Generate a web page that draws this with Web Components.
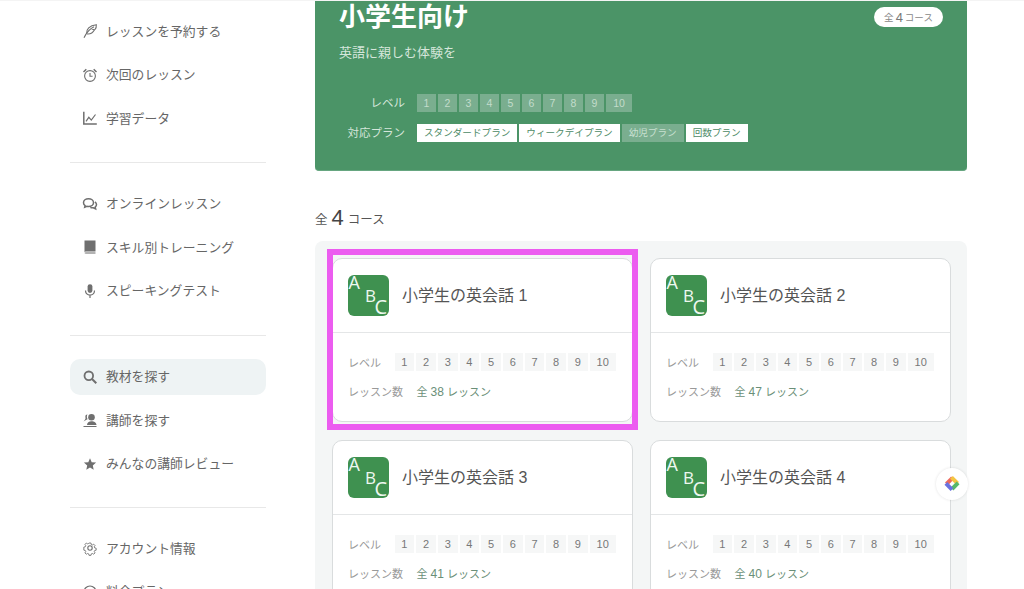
<!DOCTYPE html>
<html lang="ja">
<head>
<meta charset="utf-8">
<title>教材を探す</title>
<style>
  html, body { margin: 0; height: 589px; overflow: hidden; background: #fff; }
  body { font-family: "Liberation Sans", "Noto Sans CJK JP", sans-serif; color: #666; }
</style>
</head>
<body>
<app-shell>
  <side-nav slot="side">
    <nav-group>
      <nav-item icon="feather">レッスンを予約する</nav-item>
      <nav-item icon="clock">次回のレッスン</nav-item>
      <nav-item icon="chart">学習データ</nav-item>
    </nav-group>
    <nav-group>
      <nav-item icon="chat">オンラインレッスン</nav-item>
      <nav-item icon="book">スキル別トレーニング</nav-item>
      <nav-item icon="mic">スピーキングテスト</nav-item>
    </nav-group>
    <nav-group>
      <nav-item icon="search" active>教材を探す</nav-item>
      <nav-item icon="user">講師を探す</nav-item>
      <nav-item icon="star">みんなの講師レビュー</nav-item>
    </nav-group>
    <nav-group last>
      <nav-item icon="gear">アカウント情報</nav-item>
      <nav-item icon="plan">料金プラン</nav-item>
    </nav-group>
  </side-nav>
  <hero-banner heading="小学生向け" desc="英語に親しむ体験を" count="4"></hero-banner>
  <course-count count="4"></course-count>
  <course-panel>
    <course-card name="小学生の英会話 1" lessons="38" highlight></course-card>
    <course-card name="小学生の英会話 2" lessons="47"></course-card>
    <course-card name="小学生の英会話 3" lessons="41"></course-card>
    <course-card name="小学生の英会話 4" lessons="40"></course-card>
  </course-panel>
</app-shell>
<float-button></float-button>

<script>
const ICONS = {
  feather: '<path d="M2 14.800C4.500 9.500 7.500 6 12 3.800"/><path d="M4.600 10.800C4 6.500 7.500 2.300 14.300 1.700c.2 2-.3 3.500-1.200 4.600l-2 .2 1.300.6c-1.500 2.800-4.200 4.200-7.300 3.900"/>',
  clock: '<circle cx="8" cy="9" r="5.400"/><path d="M8 5.900v3.300h2.600"/><path d="M1.500 5 4.300 2.300M14.500 5 11.700 2.300" stroke-width="1.500"/>',
  chart: '<path d="M1.800 1.800V14h13" stroke-width="1.500"/><path d="M4 11.300 6.800 7.300l2.500 2.800L13.500 4.500" stroke-width="1.200"/>',
  chat: '<path d="M6.500 2.800c-2.800 0-5 1.700-5 3.900 0 1.200.6 2.200 1.600 2.900l-.4 1.700 2.200-1c.5.100 1 .2 1.600.2 2.800 0 5-1.700 5-3.800s-2.200-3.900-5-3.900z" stroke-width="1.500"/><path d="M12.900 5.800c1 .6 1.600 1.600 1.600 2.700 0 1-.5 1.900-1.300 2.500l.4 1.800-2.300-1.100c-1.100.2-2.200 0-3-.4" stroke-width="1.500"/>',
  book: '<path fill="#6f6f6f" stroke="none" d="M2.500 1.500h11v11H4.500c-1.200 0-2 .4-2 1z"/><path fill="#9a9a9a" stroke="none" d="M4.500 13.300h9v1.400h-9c-1.200 0-2-.3-2-.7s.8-.7 2-.7z"/>',
  mic: '<rect x="5.600" y="1.200" width="4.800" height="8.800" rx="2.400" fill="#6f6f6f" stroke="none"/><path d="M3.500 7.500c0 2.800 2 4.700 4.500 4.700s4.500-1.900 4.500-4.700M8 12.200v2.800" stroke-width="1.200"/>',
  search: '<circle cx="6.800" cy="6.800" r="4.300" stroke-width="1.800"/><path d="m10 10 4.300 4.300" stroke-width="2"/>',
  user: '<circle cx="9.500" cy="5.300" r="3.300" fill="#6f6f6f" stroke="none"/><path fill="#6f6f6f" stroke="none" d="M5 13c0-2.500 2-3.800 4.500-3.800S14.500 10.500 14.500 13zM1.500 14h13v1h-13zM3.500 3.500a2.300 2.300 0 0 1 2-1.100c-.7 1-.9 2.700-.2 4 .3.600.1.900-.4 1.200L1.500 9.500c.7-.9 1.500-1.700 2-2.700.2-1.300-.4-2.200 0-3.300z"/>',
  star: '<path fill="#6f6f6f" stroke="none" d="m8 2.300 1.700 3.900 4.400.4-3.300 2.900.9 4.200L8 11.600l-3.700 2.100.9-4.200-3.300-2.900 4.400-.4z"/>',
  gear: '<circle cx="8" cy="8" r="2.200"/><path d="M6.800 1.800h2.400l.4 1.800 1.400.6 1.600-1 1.700 1.700-1 1.600.6 1.400 1.800.4v2.400l-1.800.4-.6 1.400 1 1.600-1.700 1.700-1.600-1-1.400.6-.4 1.800H6.800l-.4-1.800-1.400-.6-1.600 1-1.700-1.700 1-1.600-.6-1.400-1.800-.4V6.900l1.800-.4.600-1.400-1-1.600 1.700-1.700 1.600 1 1.400-.6z" transform="translate(1.600 1.600) scale(.8)"/>',
  plan: '<circle cx="8" cy="8" r="6" stroke-width="1.200"/><path d="M8 5v6"/>'
};

class AppShell extends HTMLElement {
  constructor() {
    super();
    this.attachShadow({ mode: 'open' }).innerHTML = `
      <style>
        :host { display: flex; gap: 49px; padding-left: 70px; height: 588px; overflow: hidden; border-top: 1px solid #f4f4f4; }
        main { width: 652px; display: block; }
      </style>
      <slot name="side"></slot>
      <main><slot></slot></main>`;
  }
}
customElements.define('app-shell', AppShell);

class SideNav extends HTMLElement {
  constructor() {
    super();
    this.attachShadow({ mode: 'open' }).innerHTML = `
      <style>:host { display: block; width: 196px; flex: none; padding-top: 12px; }</style>
      <slot></slot>`;
  }
}
customElements.define('side-nav', SideNav);

class NavGroup extends HTMLElement {
  constructor() {
    super();
    this.attachShadow({ mode: 'open' }).innerHTML = `
      <style>
        :host { display: flex; flex-direction: column; gap: 7.600px; padding-bottom: 25.600px; margin-bottom: 23px; border-bottom: 1px solid #e8e8e8; }
        :host([last]) { border-bottom: 0; padding-bottom: 0; margin: -1px 0 0; }
      </style>
      <slot></slot>`;
  }
}
customElements.define('nav-group', NavGroup);

class NavItem extends HTMLElement {
  constructor() {
    super();
    const icon = ICONS[this.getAttribute('icon')] || '';
    this.attachShadow({ mode: 'open' }).innerHTML = `
      <style>
        :host { display: flex; align-items: center; gap: 8px; height: 36px; padding-left: 12px; border-radius: 10px; font-size: 12.800px; color: #666; white-space: nowrap; }
        :host([active]) { background: #eef3f4; }
        svg { width: 16px; height: 16px; flex: none; fill: none; stroke: #6f6f6f; stroke-width: 1.100; }
        span { margin-top: -2px; }
      </style>
      <svg viewBox="0 0 16 16">${icon}</svg>
      <span><slot></slot></span>`;
  }
}
customElements.define('nav-item', NavItem);

const LEVELS = [1, 2, 3, 4, 5, 6, 7, 8, 9, 10];

class HeroBanner extends HTMLElement {
  constructor() {
    super();
    const plans = [['スタンダードプラン', 1], ['ウィークデイプラン', 1], ['幼児プラン', 0], ['回数プラン', 1]];
    this.attachShadow({ mode: 'open' }).innerHTML = `
      <style>
        :host { display: block; box-sizing: border-box; height: 170px; padding: 0 24px; background: #4b9467; border-bottom: 1px solid #66a680; border-radius: 0 0 4px 4px; color: #fff; }
        .head { display: flex; justify-content: space-between; align-items: flex-start; }
        h1 { margin: 0; font-size: 26px; line-height: 32px; font-weight: 700; }
        .badge { box-sizing: border-box; width: 69px; margin-top: 6px; display: flex; align-items: center; justify-content: center; gap: 2px; height: 20px; border-radius: 10px; background: #fff; color: #888; font-size: 9.500px; white-space: nowrap; }
        .badge b { font-weight: 400; font-size: 13px; color: #777; }
        p { margin: 10px 0 0; font-size: 13px; line-height: 20px; color: #d5e6db; }
        .meta { margin-top: 31px; display: grid; grid-template-columns: 66px auto; column-gap: 12px; row-gap: 12px; justify-content: start; }
        .label { font-size: 11.500px; line-height: 18px; text-align: right; color: #d5e6db; white-space: nowrap; }
        .chips { display: flex; gap: 2px; }
        .lv { width: 19px; height: 18px; line-height: 18px; text-align: center; background: #7aae8f; color: #c2dccb; font-size: 10.500px; }
        .lv.wide { width: 26px; }
        .plan { height: 18px; line-height: 18px; padding: 0 7px; font-size: 9.600px; background: #fff; color: #4c8a66; white-space: nowrap; }
        .plan.off { background: #7aae8f; color: #c8e0d1; }
      </style>
      <div class="head">
        <h1>${this.getAttribute('heading')}</h1>
        <div class="badge">全 <b>${this.getAttribute('count')}</b> コース</div>
      </div>
      <p>${this.getAttribute('desc')}</p>
      <div class="meta">
        <div class="label">レベル</div>
        <div class="chips">${LEVELS.map(n => `<span class="lv${n === 10 ? ' wide' : ''}">${n}</span>`).join('')}</div>
        <div class="label">対応プラン</div>
        <div class="chips">${plans.map(([t, on]) => `<span class="plan${on ? '' : ' off'}">${t}</span>`).join('')}</div>
      </div>`;
  }
}
customElements.define('hero-banner', HeroBanner);

class CourseCount extends HTMLElement {
  constructor() {
    super();
    this.attachShadow({ mode: 'open' }).innerHTML = `
      <style>
        :host { display: flex; align-items: center; gap: 4px; height: 30px; margin: 32px 0 8px; font-size: 12.500px; color: #555; }
        b { font-weight: 400; font-size: 22px; color: #444; }
      </style>
      全 <b>${this.getAttribute('count')}</b> コース`;
  }
}
customElements.define('course-count', CourseCount);

class CoursePanel extends HTMLElement {
  constructor() {
    super();
    this.attachShadow({ mode: 'open' }).innerHTML = `
      <style>
        :host { display: grid; grid-template-columns: 301px 301px; gap: 18px 17px; padding: 17px 16px 17px 17px; background: #f4f6f6; border-radius: 8px; }
      </style>
      <slot></slot>`;
  }
}
customElements.define('course-panel', CoursePanel);

class CourseCard extends HTMLElement {
  constructor() {
    super();
    this.attachShadow({ mode: 'open' }).innerHTML = `
      <style>
        :host { display: block; position: relative; box-sizing: border-box; height: 164px; background: #fff; border: 1px solid #d9dcdd; border-radius: 10px; }
        :host([highlight])::after { content: ""; position: absolute; inset: -10px -6px -9px -6px; border: 6px solid #ec5cf0; pointer-events: none; }
        .top { display: flex; align-items: center; gap: 13px; height: 73px; padding-left: 15px; border-bottom: 1px solid #e4e6e7; }
        .top svg { width: 41px; height: 41px; flex: none; overflow: visible; }
        h2 { margin: -4px 0 0; font-size: 16px; font-weight: 400; color: #555; white-space: nowrap; }
        .body { padding: 20px 15px; display: grid; row-gap: 11px; }
        .row { display: flex; align-items: center; gap: 13.500px; height: 18px; font-size: 11px; }
        .label { color: #999; white-space: nowrap; }
        .chips { display: flex; gap: 2px; }
        .lv { width: 19.700px; height: 18px; line-height: 18px; text-align: center; background: #f6f7f7; color: #777; font-size: 11px; }
        .lv.wide { width: 26px; }
        .val { color: #6a8f78; white-space: nowrap; }
        .val b { font-weight: 400; font-size: 12px; }
      </style>
      <div class="top">
        <svg viewBox="0 0 41 41">
          <rect width="41" height="41" rx="6" fill="#3f9150"/>
          <g fill="#eef8f0" font-family="Open Sans, sans-serif">
            <text x="0.500" y="14" font-size="18">A</text>
            <text x="17" y="27" font-size="17">B</text>
            <text x="26.500" y="38.500" font-size="20">C</text>
          </g>
        </svg>
        <h2>${this.getAttribute('name')}</h2>
      </div>
      <div class="body">
        <div class="row">
          <span class="label">レベル</span>
          <div class="chips">${LEVELS.map(n => `<span class="lv${n === 10 ? ' wide' : ''}">${n}</span>`).join('')}</div>
        </div>
        <div class="row">
          <span class="label">レッスン数</span>
          <span class="val">全 <b>${this.getAttribute('lessons')}</b> レッスン</span>
        </div>
      </div>`;
  }
}
customElements.define('course-card', CourseCard);

class FloatButton extends HTMLElement {
  constructor() {
    super();
    this.attachShadow({ mode: 'open' }).innerHTML = `
      <style>
        :host { position: fixed; left: 936px; top: 468px; width: 32px; height: 32px; display: flex; align-items: center; justify-content: center; background: #fff; border-radius: 50%; box-shadow: 0 0 3px rgba(0,0,0,.12); }
        svg { width: 20px; height: 20px; fill: none; stroke-width: 3.600; }
      </style>
      <svg viewBox="0 0 18 18">
        <path d="M9.500 3.500 4 9" stroke="#ee6a5e"/>
        <path d="M8.500 3 14 8.500" stroke="#f4c542"/>
        <path d="M14.500 8 9 13.500" stroke="#58b86a"/>
        <path d="M3.500 8.500 9 14" stroke="#6a72e0"/>
      </svg>`;
  }
}
customElements.define('float-button', FloatButton);
</script>
</body>
</html>
